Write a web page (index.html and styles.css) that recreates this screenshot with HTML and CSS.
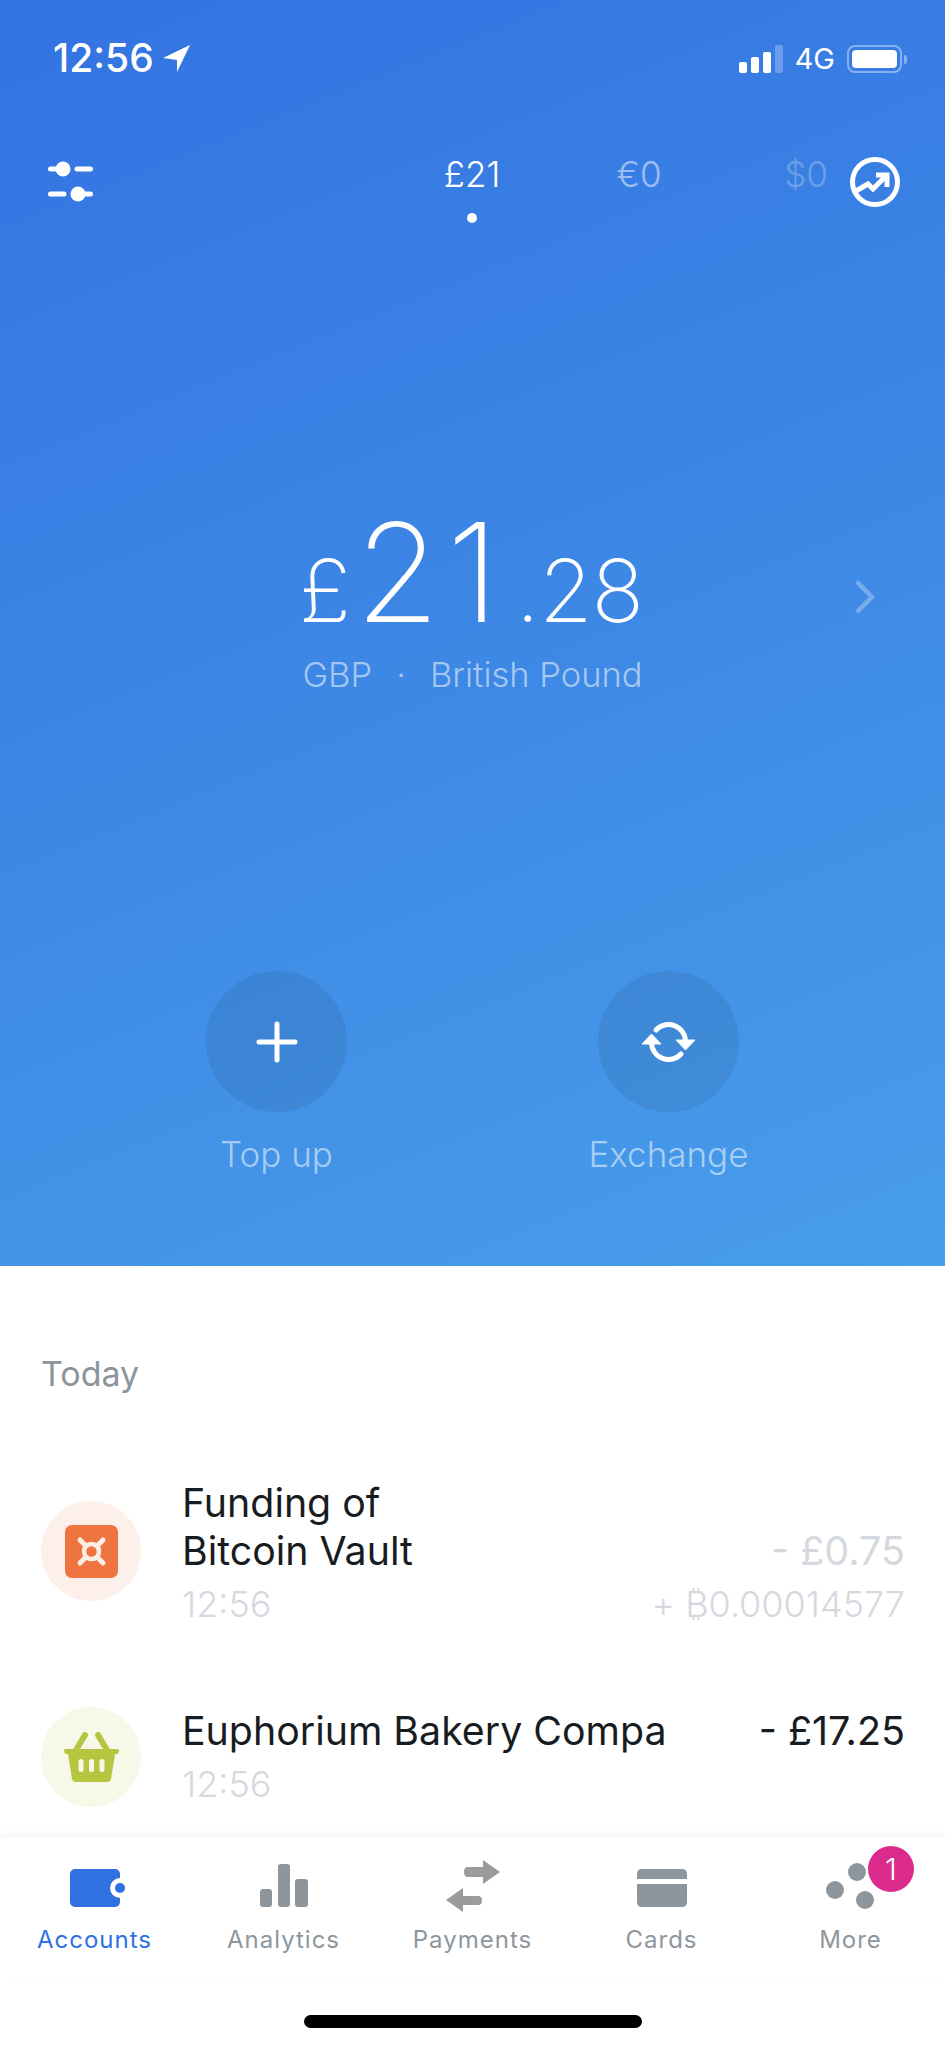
FILE: index.html
```html
<!DOCTYPE html>
<html lang="en">
<head>
    <meta charset="UTF-8">
    <meta name="viewport" content="width=device-width, initial-scale=1.0">
    <title>Accounts</title>
    <link rel="stylesheet" href="styles.css">
</head>
<body>
    <div class="app">
        <section class="hero">
            <div class="status-bar">
                <div class="status-left">
                    <span class="clock">12:56</span>
                    <svg class="location" width="28" height="28" viewBox="0 0 28 28"><path d="M27 0 L0 13 L14 15 L14 27 Z" fill="#fff"/></svg>
                </div>
                <div class="status-right">
                    <div class="signal">
                        <span class="bar bar-1"></span>
                        <span class="bar bar-2"></span>
                        <span class="bar bar-3"></span>
                        <span class="bar bar-4"></span>
                    </div>
                    <span class="network">4G</span>
                    <div class="battery"><span class="battery-level"></span></div>
                    <span class="battery-nub"></span>
                </div>
            </div>

            <div class="top-nav">
                <svg class="sliders" width="45" height="41" viewBox="0 0 45 41">
                    <path d="M2.5 8 H14 M29 8 H42.5 M2.5 33 H16 M31 33 H42.5" stroke="#fff" stroke-width="5" stroke-linecap="round"/>
                    <circle cx="15" cy="8" r="7.5" fill="#fff"/>
                    <circle cx="30" cy="33" r="7.5" fill="#fff"/>
                </svg>
                <div class="currencies">
                    <div class="currency active">£21<span class="currency-dot"></span></div>
                    <div class="currency second">€0</div>
                    <div class="currency third">$0</div>
                </div>
                <svg class="trend" width="50" height="50" viewBox="0 0 50 50">
                    <circle cx="25" cy="25" r="22.5" fill="none" stroke="#fff" stroke-width="5"/>
                    <path d="M6 34 L18 27 L23 32 L36 19" fill="none" stroke="#fff" stroke-width="5"/>
                    <path d="M26 18 H37 V30" fill="none" stroke="#fff" stroke-width="5"/>
                </svg>
            </div>

            <div class="balance">
                <span></span>
                <div class="amount">
                    <span class="amount-small">£</span><span class="amount-big">21</span><span class="amount-small amount-cents">.28</span>
                </div>
                <svg class="chevron" width="20" height="34" viewBox="0 0 20 34"><path d="M3 3 L17 17 L3 31" fill="none" stroke="#fff" stroke-width="4.5" stroke-linecap="round" stroke-linejoin="round"/></svg>
            </div>
            <div class="balance-label">GBP<span class="separator">·</span>British Pound</div>

            <div class="actions">
                <div class="action">
                    <div class="action-circle">
                        <svg width="42" height="42" viewBox="0 0 42 42"><path d="M21 3 V39 M3 21 H39" stroke="#fff" stroke-width="5" stroke-linecap="round"/></svg>
                    </div>
                    <div class="action-label">Top up</div>
                </div>
                <div class="action">
                    <div class="action-circle">
                        <svg width="54" height="42" viewBox="0 0 54 42">
                            <path d="M14 9 A17 17 0 0 1 43.5 20 M39 33 A17 17 0 0 1 9.5 22" fill="none" stroke="#fff" stroke-width="5" stroke-linecap="round"/>
                            <path d="M34 19 H53 L43.5 29 Z M0 23 H19 L9.5 13 Z" fill="#fff" stroke="#fff" stroke-width="1" stroke-linejoin="round"/>
                        </svg>
                    </div>
                    <div class="action-label">Exchange</div>
                </div>
            </div>
        </section>

        <section class="transactions">
            <div class="day">Today</div>

            <div class="transaction first">
                <div class="tx-icon vault">
                    <svg width="53" height="53" viewBox="0 0 53 53">
                        <rect width="53" height="53" rx="7" fill="#ee7440"/>
                        <path d="M15 15 L38 38 M38 15 L15 38" stroke="#fdeee6" stroke-width="5" stroke-linecap="round"/>
                        <circle cx="26.5" cy="26.5" r="7.5" fill="#ee7440" stroke="#fdeee6" stroke-width="4.5"/>
                    </svg>
                </div>
                <div class="tx-main">
                    <div class="tx-title">Funding of<br>Bitcoin Vault</div>
                    <div class="tx-time">12:56</div>
                </div>
                <div class="tx-side">
                    <div class="tx-amount muted">- £0.75</div>
                    <div class="tx-sub">+ ₿0.00014577</div>
                </div>
            </div>

            <div class="transaction">
                <div class="tx-icon bakery">
                    <svg width="55" height="50" viewBox="0 0 55 50">
                        <path d="M12 18 L21 3 M43 18 L34 3" stroke="#b7c640" stroke-width="6" stroke-linecap="round"/>
                        <path d="M1.5 17 H53.5 Q55 17 55 18.5 L54 22 H51 L47 47 Q46.5 50 43 50 H12 Q8.5 50 8 47 L4 22 H1 L0 18.5 Q0 17 1.5 17 Z" fill="#b7c640"/>
                        <rect x="14.5" y="27" width="5" height="13" rx="2.5" fill="#f6f9e6"/>
                        <rect x="25" y="27" width="5" height="13" rx="2.5" fill="#f6f9e6"/>
                        <rect x="35.5" y="27" width="5" height="13" rx="2.5" fill="#f6f9e6"/>
                    </svg>
                </div>
                <div class="tx-main">
                    <div class="tx-title">Euphorium Bakery Compa</div>
                    <div class="tx-time">12:56</div>
                </div>
                <div class="tx-side">
                    <div class="tx-amount">- £17.25</div>
                </div>
            </div>
        </section>

        <nav class="tab-bar">
            <div class="tab active">
                <svg class="tab-icon wallet" width="56" height="52" viewBox="0 0 56 52">
                    <rect x="0" y="9" width="50" height="38" rx="5" fill="#2f71e3"/>
                    <circle cx="50" cy="28" r="10" fill="#fff"/>
                    <circle cx="50" cy="28" r="5" fill="#2f71e3"/>
                </svg>
                <span class="tab-label">Accounts</span>
            </div>
            <div class="tab">
                <svg class="tab-icon" width="48" height="52" viewBox="0 0 48 52">
                    <rect x="0" y="29" width="12" height="18" rx="3" fill="#8e969d"/>
                    <rect x="18" y="4" width="12" height="43" rx="3" fill="#8e969d"/>
                    <rect x="35" y="19" width="13" height="28" rx="3" fill="#8e969d"/>
                </svg>
                <span class="tab-label">Analytics</span>
            </div>
            <div class="tab">
                <svg class="tab-icon" width="54" height="52" viewBox="0 0 54 52">
                    <path d="M37 0 L54 12 L37 24 V17 H22 Q18 17 18 12 Q18 7 22 7 H37 Z" fill="#9b9b9b"/>
                    <path d="M17 28 L0 40 L17 52 V45 H32 Q36 45 36 40.5 Q36 36 32 36 H17 Z" fill="#9b9b9b"/>
                </svg>
                <span class="tab-label">Payments</span>
            </div>
            <div class="tab">
                <svg class="tab-icon" width="50" height="52" viewBox="0 0 50 52">
                    <path d="M5 9 H45 Q50 9 50 14 V19 H0 V14 Q0 9 5 9 Z" fill="#8e969d"/>
                    <path d="M0 24 H50 V42 Q50 47 45 47 H5 Q0 47 0 42 Z" fill="#8e969d"/>
                </svg>
                <span class="tab-label">Cards</span>
            </div>
            <div class="tab">
                <svg class="tab-icon" width="50" height="52" viewBox="0 0 50 52">
                    <circle cx="9" cy="30" r="9" fill="#8e969d"/>
                    <circle cx="31" cy="12" r="9" fill="#8e969d"/>
                    <circle cx="39" cy="40" r="9" fill="#8e969d"/>
                </svg>
                <span class="tab-label">More</span>
                <span class="badge">1</span>
            </div>
        </nav>

        <div class="home-area"><span class="home-indicator"></span></div>
    </div>
</body>
</html>
```

FILE: styles.css
```css
* {
    box-sizing: border-box;
}
body {
    margin: 0;
    font-family: Inter, "Noto Sans", sans-serif;
    background-color: #fff;
}
.app {
    width: 945px;
    height: 2048px;
    display: flex;
    flex-direction: column;
    overflow: hidden;
}

/* blue part */
.hero {
    height: 1266px;
    flex: none;
    background: linear-gradient(158deg, #3373e2 0%, #3d87e5 50%, #489eea 100%);
    color: #fff;
}
.status-bar {
    display: flex;
    justify-content: space-between;
    height: 159px;
    padding: 37px 38px 0 53px;
}
.status-left {
    display: flex;
    height: 42px;
    align-items: center;
}
.clock {
    font-size: 39px;
    font-weight: 500;
    line-height: 42px;
}
.location {
    margin-left: 9px;
    margin-top: 2px;
}
.status-right {
    display: flex;
    height: 42px;
    align-items: center;
}
.signal {
    display: flex;
    align-items: flex-end;
    gap: 4px;
    height: 28px;
    margin-top: 2px;
}
.bar {
    width: 8px;
    background-color: #fff;
    border-radius: 2px;
}
.bar-1 { height: 11px; }
.bar-2 { height: 16px; }
.bar-3 { height: 21px; }
.bar-4 { height: 28px; background-color: rgba(255, 255, 255, .25); }
.network {
    font-size: 29px;
    font-weight: 400;
    margin-left: 12px;
}
.battery {
    width: 55px;
    height: 28px;
    margin-left: 12px;
    margin-top: 2px;
    padding: 3px;
    border: 2px solid rgba(255, 255, 255, .4);
    border-radius: 8px;
}
.battery-level {
    display: block;
    height: 100%;
    background-color: #fff;
    border-radius: 4px;
}
.battery-nub {
    width: 3px;
    height: 9px;
    margin-left: 2px;
    margin-top: 2px;
    background-color: rgba(255, 255, 255, .4);
    border-radius: 0 3px 3px 0;
}

.top-nav {
    display: flex;
    align-items: flex-start;
    height: 348px;
    padding-left: 48px;
}
.sliders {
    margin-top: 2px;
    flex: none;
}
.currencies {
    display: flex;
    gap: 87px;
    margin-left: 339px;
    margin-top: -5px;
}
.currency {
    width: 80px;
    text-align: center;
    font-size: 35px;
    font-weight: 300;
    line-height: 40px;
}
.currency.second { opacity: .5; }
.currency.third { opacity: .25; }
.currency-dot {
    display: block;
    width: 10px;
    height: 10px;
    margin: 19px auto 0;
    background-color: #fff;
    border-radius: 50%;
}
.trend {
    margin-left: 4px;
    margin-top: -2px;
    flex: none;
}

.balance {
    display: grid;
    grid-template-columns: 1fr auto 1fr;
    align-items: center;
}
.amount {
    display: flex;
    align-items: baseline;
    line-height: 130px;
    margin-right: 3px;
    font-weight: 200;
}
.amount-small {
    font-size: 87px;
}
.amount-big {
    font-size: 137px;
    letter-spacing: 7px;
    margin: 0 10px 0 4px;
}
.amount-cents {
    letter-spacing: -1px;
}
.chevron {
    justify-self: end;
    margin-right: 70px;
    margin-top: 30px;
    opacity: .3;
}
.balance-label {
    margin-top: -3px;
    text-align: center;
    font-size: 34.5px;
    font-weight: 300;
    line-height: 44px;
    color: rgba(255, 255, 255, .55);
}
.separator {
    margin: 0 24px;
}

.actions {
    display: flex;
    justify-content: center;
    gap: 212px;
    margin-top: 274px;
}
.action {
    width: 180px;
    display: flex;
    flex-direction: column;
    align-items: center;
}
.action-circle {
    width: 141px;
    height: 141px;
    display: flex;
    align-items: center;
    justify-content: center;
    background-color: rgba(0, 0, 0, .07);
    border-radius: 50%;
}
.action-label {
    margin-top: 20px;
    font-size: 35px;
    font-weight: 300;
    line-height: 44px;
    color: rgba(255, 255, 255, .55);
}

/* list */
.transactions {
    flex: 1;
    padding: 86px 40px 0 41px;
    overflow: hidden;
}
.day {
    font-size: 34px;
    font-weight: 400;
    line-height: 44px;
    color: #8b959e;
}
.transaction {
    display: flex;
    align-items: flex-start;
    margin-top: 81px;
}
.transaction.first {
    margin-top: 83px;
}
.tx-icon {
    width: 100px;
    height: 100px;
    flex: none;
    display: flex;
    align-items: center;
    justify-content: center;
    border-radius: 50%;
}
.vault {
    background-color: #fdf0ea;
    margin-top: 22px;
}
.bakery {
    background-color: #f6f9e8;
}
.tx-main {
    flex: 1;
    margin-left: 41px;
}
.tx-title {
    font-size: 39.3px;
    font-weight: 400;
    line-height: 48px;
    color: #191c1f;
}
.tx-time {
    margin-top: 7px;
    font-size: 36px;
    font-weight: 300;
    line-height: 44px;
    color: #d5d9df;
}
.tx-side {
    text-align: right;
}
.transaction.first .tx-side {
    margin-top: 48px;
}
.tx-amount {
    font-size: 39.5px;
    font-weight: 400;
    line-height: 48px;
    color: #191c1f;
}
.tx-amount.muted {
    color: #d5d9df;
}
.tx-sub {
    margin-top: 7px;
    font-size: 36px;
    font-weight: 300;
    line-height: 44px;
    color: #d5d9df;
}

/* tabs */
.tab-bar {
    position: relative;
    flex: none;
    height: 140px;
    display: grid;
    grid-template-columns: repeat(5, 1fr);
    background-color: #fff;
    box-shadow: 0 -6px 14px rgba(0, 0, 0, .035);
}
.tab {
    position: relative;
    display: flex;
    flex-direction: column;
    align-items: center;
    padding-top: 22px;
    color: #8e969d;
}
.tab.active {
    color: #2f71e3;
}
.tab-icon {
    flex: none;
}
.wallet {
    margin-left: 6px;
}
.tab-label {
    margin-top: 13px;
    font-size: 24px;
    font-weight: 400;
    line-height: 30px;
    letter-spacing: 1px;
}
.badge {
    position: absolute;
    left: 112px;
    top: 8px;
    width: 46px;
    height: 46px;
    background-color: #db2a8c;
    border-radius: 50%;
    color: #fff;
    font-size: 30px;
    font-weight: 300;
    line-height: 46px;
    text-align: center;
}
.home-area {
    flex: none;
    height: 70px;
    padding-top: 37px;
    background-color: #fff;
}
.home-indicator {
    display: block;
    width: 338px;
    height: 13px;
    margin: 0 auto;
    background-color: #000;
    border-radius: 7px;
}
```
